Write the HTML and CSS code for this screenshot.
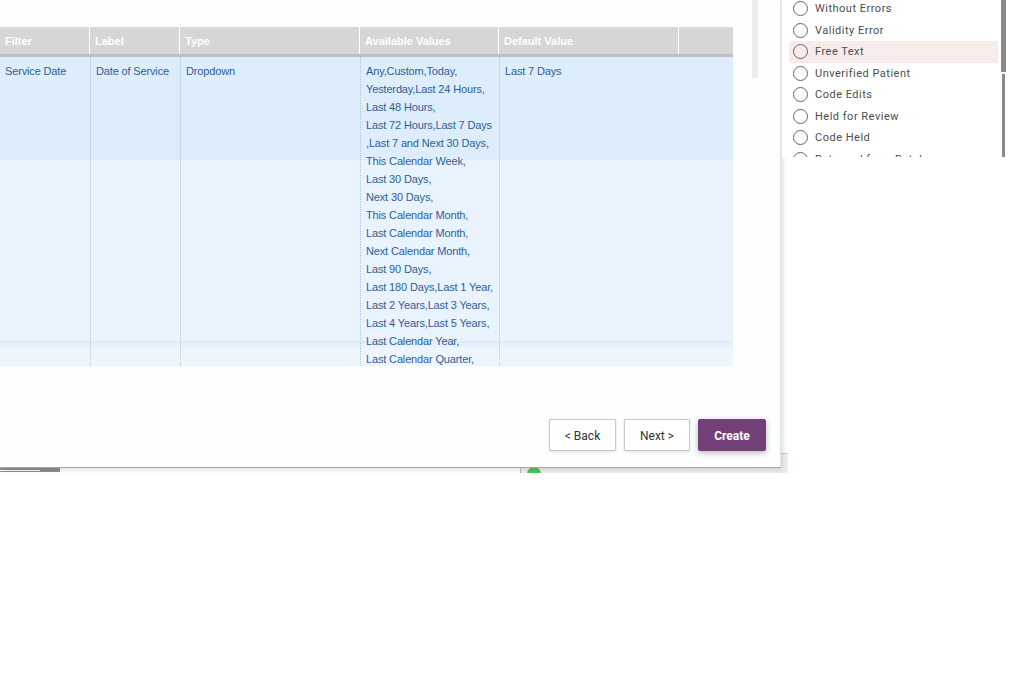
FILE: index.html
```html
<!DOCTYPE html>
<html lang="en">
<head>
<meta charset="utf-8">
<title>Report Filters</title>
<link rel="stylesheet" href="styles.css">
</head>
<body>
<div class="screen">
  <div class="backdrop">
    <div class="backdrop-left">
      <div class="hscroll"><span class="hscroll-line"></span></div>
    </div>
    <div class="status-strip"><span class="status-dot"></span></div>
  </div>

  <section class="modal">
    <div class="modal-body">
      <div class="grid">
        <div class="grid-head">
          <div class="th">Filter</div>
          <div class="th">Label</div>
          <div class="th">Type</div>
          <div class="th">Available Values</div>
          <div class="th">Default Value</div>
          <div class="th th-last"></div>
        </div>
        <div class="grid-body">
          <div class="td td-first">Service Date</div>
          <div class="td">Date of Service</div>
          <div class="td">Dropdown</div>
          <div class="td">Any,Custom,Today,<br>Yesterday,Last 24 Hours,<br>Last 48 Hours,<br>Last 72 Hours,Last 7 Days<br>,Last 7 and Next 30 Days,<br>This Calendar Week,<br>Last 30 Days,<br>Next 30 Days,<br>This Calendar Month,<br>Last Calendar Month,<br>Next Calendar Month,<br>Last 90 Days,<br>Last 180 Days,Last 1 Year,<br>Last 2 Years,Last 3 Years,<br>Last 4 Years,Last 5 Years,<br>Last Calendar Year,<br>Last Calendar Quarter,<br>This Calendar Quarter,<br>Next Calendar Quarter</div>
          <div class="td">Last 7 Days</div>
          <div class="td td-last"></div>
        </div>
      </div>
      <div class="vscroll"></div>
    </div>
    <div class="modal-footer">
      <button class="btn btn-back" type="button">&lt; Back</button>
      <button class="btn btn-next" type="button">Next &gt;</button>
      <button class="btn btn-primary" type="button">Create</button>
    </div>
  </section>

  <aside class="status-menu">
    <ul class="options">
      <li class="option"><span class="radio"></span><span class="option-label">Without Errors</span></li>
      <li class="option"><span class="radio"></span><span class="option-label">Validity Error</span></li>
      <li class="option option-hover"><span class="radio"></span><span class="option-label">Free Text</span></li>
      <li class="option"><span class="radio"></span><span class="option-label">Unverified Patient</span></li>
      <li class="option"><span class="radio"></span><span class="option-label">Code Edits</span></li>
      <li class="option"><span class="radio"></span><span class="option-label">Held for Review</span></li>
      <li class="option"><span class="radio"></span><span class="option-label">Code Held</span></li>
      <li class="option"><span class="radio"></span><span class="option-label">Returned from Batch</span></li>
    </ul>
    <div class="menu-scroll">
      <span class="sb sb-1"></span>
      <span class="sb sb-2"></span>
    </div>
  </aside>
</div>
</body>
</html>
```

FILE: styles.css
```css
* { box-sizing: border-box; }

html, body {
  margin: 0;
  padding: 0;
  background: #ffffff;
}

.screen {
  position: relative;
  width: 1034px;
  height: 682px;
  overflow: hidden;
  font-family: "Liberation Sans", Arial, sans-serif;
}

/* ---------- background application fragments ---------- */
.backdrop {
  display: flex;
  padding-top: 453px;
}

.backdrop-left {
  width: 520px;
}

.hscroll {
  margin-top: 15px;
  width: 60px;
  height: 4px;
  background: #8d8e90;
  padding-top: 2px;
}

.hscroll-line {
  display: block;
  width: 40px;
  height: 1px;
  background: #ffffff;
}

.status-strip {
  width: 268px;
  height: 20px;
  background: #f1edf3;
  border-top: 1px solid #c9c9c9;
  border-left: 1px solid #bdbdbd;
  overflow: hidden;
  padding-left: 6px;
}

.status-dot {
  display: block;
  margin-top: 13px;
  width: 14px;
  height: 14px;
  border-radius: 50%;
  background: #4fc25c;
}

/* ---------- modal ---------- */
.modal {
  position: absolute;
  top: 0;
  left: 0;
  width: 781px;
  height: 468px;
  background: #fdfefe;
  border-right: 1px solid #e3e3e3;
  border-bottom: 1px solid #a6a6a6;
  box-shadow: 2px 2px 5px rgba(0, 0, 0, 0.13);
  display: flex;
  flex-direction: column;
}

.modal-body {
  height: 366px;
  display: flex;
  align-items: flex-start;
}

.grid {
  width: 733px;
  height: 339px;
  margin-top: 27px;
  overflow: hidden;
}

.grid-head,
.grid-body {
  display: grid;
  grid-template-columns: 90px 90px 180px 139px 180px 54px;
}

.grid-head {
  background: #d6d6d6;
  border-bottom: 3px solid #bfbfbf;
}

.th {
  height: 27px;
  line-height: 29px;
  padding: 0 5px;
  color: #ffffff;
  font-weight: bold;
  font-size: 11px;
  border-right: 1px solid #ffffff;
  white-space: nowrap;
}

.th-last { border-right: 0; }

/* striped rows: first data row, second row, row separator band, third row */
.grid-body {
  height: 330px;
  background: linear-gradient(to bottom,
    #deedfb 0, #deedfb 103px,
    #e8f3fd 103px, #e8f3fd 284px,
    #dbeafa 284px, #e3effc 287px, #eaf4fd 291px,
    #edf6fe 291px, #edf6fe 100%);
}

.td {
  padding: 5px 5px 0 6px;
  font-size: 11px;
  line-height: 18px;
  letter-spacing: -0.15px;
  color: #2f6098;
  white-space: nowrap;
  background-image: linear-gradient(to bottom, #a3c8ea 1px, rgba(255, 255, 255, 0) 1px);
  background-size: 1px 2px;
  background-repeat: repeat-y;
  background-position: 0 0;
}

.td-first,
.td-last {
  background-image: none;
  padding-left: 5px;
}

.vscroll {
  width: 6px;
  height: 78px;
  margin-left: 19px;
  background: #ececec;
}

.modal-footer {
  display: flex;
  justify-content: flex-end;
  align-items: flex-start;
  gap: 8px;
  padding-top: 53px;
  padding-right: 14px;
}

.btn {
  height: 32px;
  background: #ffffff;
  border: 1px solid #c8c8c8;
  border-radius: 1px;
  box-shadow: 0 1px 3px rgba(0, 0, 0, 0.12);
  font-family: Roboto, "Liberation Sans", Arial, sans-serif;
  font-size: 12px;
  color: #333333;
  padding: 1px 0 0;
  cursor: pointer;
}

.btn-back { width: 67px; }
.btn-next { width: 66px; }

.btn.btn-primary {
  width: 68px;
  background: #74407a;
  border-color: #74407a;
  color: #ffffff;
  font-weight: bold;
  border-radius: 2px;
  box-shadow: 0 2px 6px rgba(0, 0, 0, 0.28);
}

/* ---------- status dropdown ---------- */
.status-menu {
  position: absolute;
  top: 0;
  left: 782px;
  width: 228px;
  height: 157px;
  background: #ffffff;
  overflow: hidden;
  display: flex;
  align-items: flex-start;
  font-family: Roboto, "Liberation Sans", Arial, sans-serif;
}

.options {
  list-style: none;
  margin: -2px 0 0 7px;
  padding: 0;
  width: 209px;
}

.option {
  height: 21.5px;
  display: flex;
  align-items: center;
  padding-left: 4px;
}

.option-hover { background: #f8eceb; }

.radio {
  width: 15px;
  height: 15px;
  border: 1px solid #666666;
  border-radius: 50%;
  flex: none;
}

.option-label {
  margin-left: 7px;
  font-size: 11px;
  letter-spacing: 0.5px;
  color: #4d4d4d;
  white-space: nowrap;
}

.menu-scroll {
  margin-left: 3px;
  display: flex;
  flex-direction: column;
  gap: 2px;
}

.sb {
  display: block;
  background: #8a8a8a;
}

.sb-1 { width: 5px; height: 72px; }
.sb-2 { width: 3px; height: 83px; margin-left: 1px; }
```
